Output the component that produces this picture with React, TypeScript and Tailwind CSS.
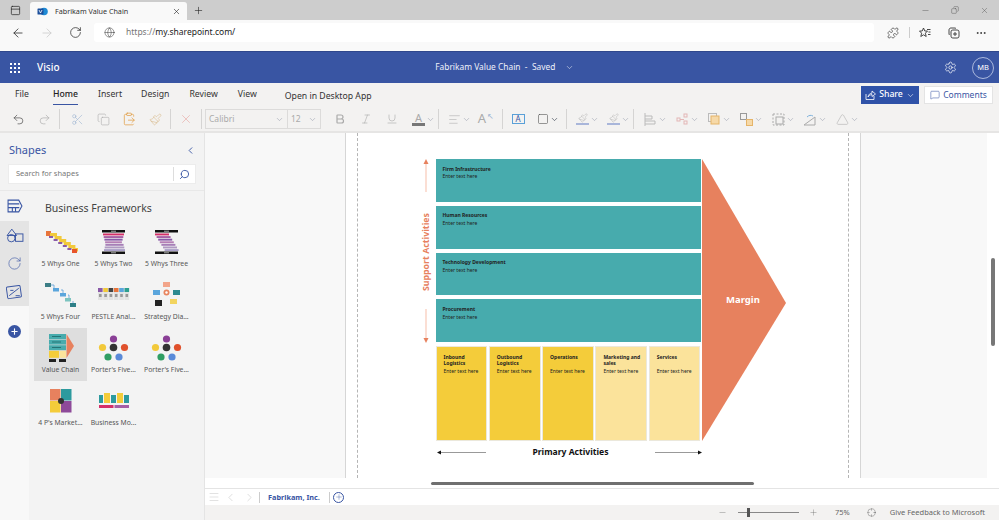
import React from "react";
import {
  ArrowLeft, ArrowRight, RotateCw, Globe, X, Plus, Minus, Settings, ChevronDown, ChevronLeft, ChevronRight,
  Search, MoreHorizontal, Undo2, Redo2, Scissors, Copy, ClipboardPaste, Paintbrush, Bold, Italic, Underline,
  AlignLeft, MessageSquare, Menu, Crosshair, Puzzle, PanelTop, Square, Copy as CopyIcon, Triangle,
} from "lucide-react";

const font = { fontFamily: '"Noto Sans", "Open Sans", sans-serif' };

function Caret({ dark }: { dark?: boolean }) {
  return <ChevronDown size={9} strokeWidth={1.5} className={dark ? "text-gray-800" : "text-gray-400"} />;
}

function Sep() {
  return <div className="w-px h-[20px] bg-[#d5d4d3] mx-[2px] shrink-0" />;
}

function Tool({ w = "w-[26px]", caret, children }: { w?: string; caret?: boolean; children: React.ReactNode }) {
  return (
    <div className={`${w} h-[20px] flex items-center gap-[1px] shrink-0 ${caret ? "justify-end pr-[1px]" : "justify-center"}`}>
      {children}
      {caret && <Caret />}
    </div>
  );
}

function Thumb({ kind }: { kind: string }) {
  if (kind === "one") {
    const c = [0, 1, 2, 3, 4, 5];
    return (
      <svg width="34" height="24" viewBox="0 0 34 24">
        <rect x="2" y="1" width="5" height="5" fill="#e8743b" />
        {c.map((i) => (
          <g key={i}>
            <rect x={6 + i * 4.6} y={3 + i * 3} width="7" height="3.5" fill="#f2c93a" />
            <rect x={5 + i * 4.6} y={6 + i * 3} width="4" height="2" fill="#8a5aa8" />
          </g>
        ))}
        <rect x="28" y="19" width="5" height="4" fill="#e8552b" />
      </svg>
    );
  }
  if (kind === "two" || kind === "three") {
    const skew = kind === "three" ? 1.6 : 0;
    const colors = ["#d42f68", "#a75fa5", "#8a5aa8", "#b57fb5", "#a67fb7", "#b09ac2", "#aaa0c8"];
    return (
      <svg width="26" height="24" viewBox="0 0 26 24">
        <rect x="1" y="0" width="23" height="2.5" fill="#111" />
        <rect x="10" y="0.6" width="5" height="1.3" fill="#888" />
        {colors.map((col, i) => (
          <rect key={i} x={skew ? 1 + i * skew : 2 + Math.min(i, 6 - i) * 0.7 + (i > 3 ? 1 : 0)} y={3.5 + i * 2.6}
            width={skew ? 14 : 21 - Math.min(i, 6 - i) * 1.4} height="1.9" fill={col} />
        ))}
        <rect x="1" y="21.5" width="23" height="2.5" fill="#111" />
        <rect x="10" y="22.1" width="5" height="1.3" fill="#888" />
      </svg>
    );
  }
  if (kind === "four") {
    return (
      <svg width="34" height="26" viewBox="0 0 34 26" fill="none">
        <path d="M6 3H10V8H14M17 8H19V13H21M24 13H25V18H27M29 19V21" stroke="#5aa0d8" strokeWidth="0.8" />
        <rect x="1" y="1" width="6" height="4" fill="#3b7d85" />
        <rect x="9" y="6" width="6" height="3.5" fill="#5aa5dc" />
        <rect x="16" y="11" width="6" height="3.5" fill="#5aa5dc" />
        <rect x="21" y="16" width="6" height="3.5" fill="#7cc4c0" />
        <rect x="26" y="21" width="6" height="4" fill="#2d7f87" />
      </svg>
    );
  }
  if (kind === "pestle") {
    const heads = ["#8a5aa8", "#f2c93a", "#444", "#e8743b", "#5aa5dc", "#2d9f8f"];
    return (
      <svg width="32" height="14" viewBox="0 0 32 14">
        {heads.map((h, i) => (
          <g key={i}>
            <rect x={i * 5.3} y="0" width="4.6" height="12" fill="#e2e2e2" />
            <rect x={i * 5.3} y="0" width="4.6" height="4" fill={h} />
            <rect x={i * 5.3 + 1} y="6" width="2.6" height="3" fill="#999" />
          </g>
        ))}
      </svg>
    );
  }
  if (kind === "strategy") {
    return (
      <svg width="30" height="26" viewBox="0 0 30 26">
        <rect x="11" y="0" width="7" height="5" fill="#f2a58a" />
        <rect x="1" y="8" width="7" height="5" fill="#5aa5dc" />
        <rect x="21" y="8" width="7" height="5" fill="#2d8a90" />
        <circle cx="14.5" cy="10.5" r="3" fill="#e8855f" />
        <circle cx="14.5" cy="10.5" r="1.2" fill="#fff" />
        <rect x="3" y="18" width="7" height="6" fill="#222" />
        <rect x="18" y="17" width="7" height="5" fill="#f2d45f" />
      </svg>
    );
  }
  if (kind === "chain") {
    return (
      <svg width="26" height="29" viewBox="0 0 26 29">
        <rect x="1" y="0" width="17" height="5" fill="#47abad" />
        <rect x="1" y="5.6" width="17" height="5" fill="#47abad" />
        <rect x="1" y="11.2" width="17" height="5" fill="#47abad" />
        <rect x="4" y="2" width="9" height="0.8" fill="#1f6668" />
        <rect x="4" y="7.6" width="9" height="0.8" fill="#1f6668" />
        <rect x="4" y="13.2" width="9" height="0.8" fill="#1f6668" />
        <rect x="1" y="16.8" width="10" height="7" fill="#f4cc3a" />
        <rect x="11.5" y="16.8" width="6.5" height="7" fill="#fbe39b" />
        <path d="M18.5 0L26 12L18.5 24Z" fill="#e7815e" />
        <rect x="1" y="25" width="7" height="3" fill="#222" />
        <rect x="11" y="25" width="7" height="3" fill="#222" />
      </svg>
    );
  }
  if (kind === "porter") {
    return (
      <svg width="31" height="26" viewBox="0 0 31 26">
        <circle cx="15.5" cy="4" r="3.6" fill="#8a3f96" />
        <circle cx="4.5" cy="12.5" r="3.6" fill="#f2c93a" />
        <circle cx="15.5" cy="12.5" r="3.8" fill="#333" />
        <circle cx="26.5" cy="12.5" r="3.6" fill="#e0512c" />
        <circle cx="10" cy="22" r="3.6" fill="#2f9e63" />
        <circle cx="21" cy="22" r="3.6" fill="#5a8ad8" />
      </svg>
    );
  }
  if (kind === "four-p") {
    return (
      <svg width="22" height="24" viewBox="0 0 22 24">
        <rect x="0" y="0" width="10.5" height="11.5" fill="#e7815e" />
        <rect x="11" y="0" width="10.5" height="11.5" fill="#2d9a9e" />
        <rect x="0" y="12" width="10.5" height="11.5" fill="#f4cc3a" />
        <rect x="11" y="12" width="10.5" height="11.5" fill="#8e4a99" />
        <circle cx="11" cy="12" r="3" fill="#333" />
      </svg>
    );
  }
  return (
    <svg width="30" height="16" viewBox="0 0 30 16">
      <rect x="0" y="2" width="4" height="8" fill="#2d9a9e" />
      <rect x="5" y="0" width="6" height="10" fill="#f4cc3a" />
      <rect x="12" y="2" width="5" height="8" fill="#2d9a9e" />
      <rect x="18" y="0" width="6" height="10" fill="#f4cc3a" />
      <rect x="25" y="2" width="5" height="8" fill="#2d9a9e" />
      <rect x="0" y="12" width="14.5" height="3" fill="#d42f68" />
      <rect x="15.5" y="12" width="14.5" height="3" fill="#a75fa5" />
    </svg>
  );
}

const shapes = [
  { label: "5 Whys One", kind: "one" },
  { label: "5 Whys Two", kind: "two" },
  { label: "5 Whys Three", kind: "three" },
  { label: "5 Whys Four", kind: "four" },
  { label: "PESTLE Anal...", kind: "pestle" },
  { label: "Strategy Dia...", kind: "strategy" },
  { label: "Value Chain", kind: "chain", active: true },
  { label: "Porter's Five...", kind: "porter" },
  { label: "Porter's Five...", kind: "porter" },
  { label: "4 P's Market...", kind: "four-p" },
  { label: "Business Mo...", kind: "bm" },
];

function Sidebar() {
  return (
    <div className="w-[205px] shrink-0 bg-[#f3f3f3] border-r border-[#e4e4e4] flex flex-col">
      <div className="h-[31px] pl-[9px] pr-[8px] flex items-center justify-between pt-[3px]">
        <span className="text-[11px] text-[#3955a3]">Shapes</span>
        <ChevronLeft size={11} className="text-[#3955a3]" />
      </div>
      <div className="mx-[8px] h-[20px] bg-white flex items-center border border-[#ececec]">
        <span className="flex-1 pl-[7px] text-[7.5px] text-[#777]">Search for shapes</span>
        <div className="w-px h-[14px] bg-[#ddd]" />
        <Search size={11} strokeWidth={2} className="text-[#3955a3] mx-[5px] -scale-x-100" />
      </div>
      <div className="mt-[6px] border-t border-[#e8e8e8] flex flex-1">
        <div className="w-[29px] shrink-0 bg-[#f8f8f8] flex flex-col">
          <div className="h-[30px] bg-[#f3f3f3] flex items-center justify-center">
            <svg width="16" height="14" viewBox="0 0 15 13" fill="none" stroke="#3955a3" strokeWidth="1">
              <path d="M1 1H11L14 6.5L11 12H1Z" />
              <path d="M1 4.5H11.5M1 8H11.5M5 8V12M8 8V12" />
            </svg>
          </div>
          <div className="h-[28px] bg-[#e4e4e4] flex items-center justify-center">
            <svg width="18" height="15" viewBox="0 0 17 14" fill="none" stroke="#3955a3" strokeWidth="0.9">
              <path d="M5.5 1L10 7H1Z" />
              <circle cx="5" cy="9.5" r="3.5" />
              <rect x="9" y="5.5" width="7" height="7" />
            </svg>
          </div>
          <div className="h-[29px] bg-[#e4e4e4] flex items-center justify-center">
            <RotateCw size={15} strokeWidth={1} className="text-[#3955a3]" />
          </div>
          <div className="h-[28px] bg-[#e4e4e4] flex items-center justify-center">
            <svg width="17" height="17" viewBox="0 0 16 16" fill="none" stroke="#3955a3" strokeWidth="0.9">
              <rect x="1" y="2" width="13" height="11" rx="1" transform="rotate(-8 8 8)" />
              <path d="M3 11L12 4M4 6H7M9 11H13" />
            </svg>
          </div>
          <div className="flex justify-center pt-[19px]">
            <div className="w-[13px] h-[13px] rounded-full bg-[#3955a3] flex items-center justify-center">
              <Plus size={9} strokeWidth={3} className="text-white" />
            </div>
          </div>
        </div>
        <div className="flex-1 pl-[5px]">
          <div className="pl-[11px] pt-[10px] h-[31px] text-[10.5px] text-[#444]">Business Frameworks</div>
          <div className="grid grid-cols-[53px_53px_53px] auto-rows-[53px]">
            {shapes.map((s, i) => (
              <div key={i} className={`flex flex-col items-center ${s.active ? "bg-[#dedede]" : ""}`}>
                <div className="h-[36px] flex items-center justify-center shrink-0 pt-[4px]">
                  <Thumb kind={s.kind} />
                </div>
                <span className="text-[6.8px] text-[#555] whitespace-nowrap leading-[12px]">{s.label}</span>
              </div>
            ))}
          </div>
        </div>
      </div>
    </div>
  );
}

function Cell({ title, yellow, light }: { title: string; yellow?: boolean; light?: boolean }) {
  const bg = yellow
    ? light ? "bg-[#fbe39b] h-[94.5px] border border-[#ebe8dc]" : "bg-[#f4cc3a] h-[94.5px] border border-[#ebe8dc]"
    : "bg-[#47abad] h-[42.75px]";
  return (
    <div className={`${bg} pl-[7px] pt-[6.5px] pr-[4px] text-[5px] leading-[6.3px] text-[#222]`}>
      <div className={`font-bold ${yellow ? "h-[12.6px]" : ""}`}>{title}</div>
      <div className="mt-[1.5px]">Enter text here</div>
    </div>
  );
}

function Diagram() {
  return (
    <div className="flex flex-col pl-[62px] pt-[26px]">
      <div className="flex">
        <div className="w-[15.5px] h-[184px] pr-[3px] flex flex-col items-center justify-between shrink-0">
          <svg width="6" height="33" viewBox="0 0 6 33">
            <path d="M3 4V33" stroke="#f8c9b8" strokeWidth="1.2" />
            <path d="M0.5 5L3 0L5.5 5Z" fill="#e7815e" />
          </svg>
          <span className="mt-[4px] [writing-mode:vertical-rl] rotate-180 text-[8.8px] font-bold text-[#e7815e] leading-none whitespace-nowrap">Support Activities</span>
          <svg width="6" height="34" viewBox="0 0 6 34">
            <path d="M3 0V29" stroke="#f8c9b8" strokeWidth="1.2" />
            <path d="M0.5 29L3 34L5.5 29Z" fill="#e7815e" />
          </svg>
        </div>
        <div className="w-[265px] shrink-0 flex flex-col gap-[4px]">
          <Cell title="Firm Infrastructure" />
          <Cell title="Human Resources" />
          <Cell title="Technology Development" />
          <Cell title="Procurement" />
          <div className="grid grid-cols-5 gap-[1.5px]">
            <Cell yellow title="Inbound Logistics" />
            <Cell yellow title="Outbound Logistics" />
            <Cell yellow title="Operations" />
            <Cell yellow light title="Marketing and sales" />
            <Cell yellow light title="Services" />
          </div>
        </div>
        <div className="relative ml-px w-[84px] h-[282px] shrink-0">
          <svg width="84" height="282" viewBox="0 0 84 282" className="block">
            <path d="M0 0L84 144L0 282Z" fill="#e7815e" />
          </svg>
          <span className="absolute left-[24.5px] top-[135.5px] text-[9.5px] font-bold text-white leading-none">Margin</span>
        </div>
      </div>
      <div className="ml-[17px] w-[265px] mt-[6px] flex items-center justify-between h-[11px]">
        <svg width="49" height="5" viewBox="0 0 49 5">
          <path d="M3 2.5H49" stroke="#999" strokeWidth="1" />
          <path d="M0 2.5L4 0.5V4.5Z" fill="#111" />
        </svg>
        <span className="text-[8.6px] font-bold text-[#111]">Primary Activities</span>
        <svg width="47" height="5" viewBox="0 0 47 5">
          <path d="M0 2.5H44" stroke="#999" strokeWidth="1" />
          <path d="M47 2.5L43 0.5V4.5Z" fill="#111" />
        </svg>
      </div>
    </div>
  );
}

export default function App() {
  return (
    <div style={font} className="w-[999px] h-[520px] overflow-hidden flex flex-col bg-white text-[#333]">
      {/* browser tabs */}
      <div className="h-[20px] bg-[#cdcdcd] flex items-end shrink-0">
        <div className="w-[30px] h-[20px] flex items-center justify-center">
          <PanelTop size={11} strokeWidth={1.5} className="text-[#222]" />
        </div>
        <div className="w-[157px] h-[18px] bg-[#f9f9f9] rounded-t-[3px] flex items-center pl-[7px] pr-[6px]">
          <svg width="11" height="11" viewBox="0 0 11 11" className="shrink-0">
            <circle cx="7" cy="5.5" r="3.8" fill="#1f8ad4" />
            <rect x="0.5" y="2.5" width="6" height="6" rx="0.6" fill="#1b4f9c" />
            <path d="M2 4L3.5 7L5 4" stroke="white" strokeWidth="0.8" fill="none" />
          </svg>
          <span className="ml-[7px] flex-1 text-[7.2px] text-[#333] whitespace-nowrap">Fabrikam Value Chain</span>
          <X size={9} strokeWidth={1.6} className="text-[#222]" />
        </div>
        <div className="w-[22px] h-[20px] flex items-center justify-center">
          <Plus size={11} strokeWidth={1.3} className="text-[#222]" />
        </div>
        <div className="flex-1" />
        <div className="h-[20px] flex items-center gap-[21px] pr-[10px] text-[#444]">
          <Minus size={9} strokeWidth={1} />
          <CopyIcon size={8} strokeWidth={1.2} className="-scale-x-100" />
          <X size={9} strokeWidth={1} />
        </div>
      </div>

      {/* address bar */}
      <div className="h-[31px] bg-[#f9f9f9] flex items-start pt-[3px] shrink-0">
        <div className="w-[94px] h-[19px] flex items-center pl-[11px] gap-[15px]">
          <ArrowLeft size={14} strokeWidth={1.3} className="text-[#222]" />
          <ArrowRight size={14} strokeWidth={1.3} className="text-[#c9c9c9]" />
          <RotateCw size={13} strokeWidth={1.3} className="text-[#222]" />
        </div>
        <div className="w-[780px] h-[19px] bg-white rounded-[3px] flex items-center pl-[10px]">
          <Globe size={11} strokeWidth={1.2} className="text-[#444]" />
          <span className="ml-[11px] text-[8.5px]"><span className="text-[#777]">https://</span><span className="text-[#222]">my.sharepoint.com/</span></span>
        </div>
        <div className="flex-1 h-[19px] flex items-center pl-[13px] text-[#333]">
          <Puzzle size={12} strokeWidth={1.3} />
          <div className="w-px h-[11px] bg-[#ccc] ml-[10px] mr-[9px]" />
          <svg width="12" height="12" viewBox="0 0 12 12" fill="none" stroke="currentColor" strokeWidth="0.9">
            <path d="M4.5 1L5.8 4H8.5L6.4 6.2L7.2 9.5L4.5 7.8L1.8 9.5L2.6 6.2L0.5 4H3.2Z" />
            <path d="M8 2.5H11.5M9.5 5H11.5M9 7.5H11.5" />
          </svg>
          <svg width="12" height="12" viewBox="0 0 12 12" fill="none" stroke="currentColor" strokeWidth="0.9" className="ml-[17px]">
            <path d="M8 1.5C7.5 1 7 1 6 1H3C1.8 1 1 1.8 1 3V6C1 7 1 7.5 1.5 8" />
            <rect x="3" y="3" width="8" height="8" rx="1.8" />
            <path d="M7 5V9M5 7H9" />
          </svg>
          <MoreHorizontal size={12} strokeWidth={1.8} className="ml-[15px]" />
        </div>
      </div>

      {/* app header */}
      <div className="h-[32px] bg-[#3955a3] border-t border-[#2f478c] flex items-center text-white shrink-0">
        <div className="w-[30px] flex justify-center">
          <div className="grid grid-cols-3 gap-[2px]">
            {Array.from({ length: 9 }).map((_, i) => (
              <div key={i} className="w-[2px] h-[2px] bg-white" />
            ))}
          </div>
        </div>
        <span className="ml-[7px] text-[10px] font-medium">Visio</span>
        <div className="flex-1 flex justify-center items-center pl-[6px] gap-[10px]">
          <span className="text-[8.4px] text-[#eef1fa]">Fabrikam Value Chain&nbsp; - &nbsp;Saved</span>
          <ChevronDown size={9} strokeWidth={1.3} />
        </div>
        <Settings size={13} strokeWidth={1.3} className="mr-[15px]" />
        <div className="w-[22px] h-[22px] rounded-full border border-[#aab8dd] flex items-center justify-center text-[7.5px] mr-[5px]">MB</div>
      </div>

      {/* ribbon */}
      <div className="h-[50px] bg-[#f3f2f1] border-b-2 border-[#e6e5e4] shrink-0 flex flex-col">
        <div className="h-[24px] flex items-center text-[8.7px] relative">
          <span className="ml-[15px]">File</span>
          <span className="ml-[24px] h-[20px] pt-[3px] border-b-[1.5px] border-[#3955a3] font-medium text-[#222]">Home</span>
          <span className="ml-[20px]">Insert</span>
          <span className="ml-[19px]">Design</span>
          <span className="ml-[20px]">Review</span>
          <span className="ml-[20px]">View</span>
          <span className="ml-[28px] pt-[3px]">Open in Desktop App</span>
          <div className="flex-1" />
          <div className="w-[58px] h-[18px] bg-[#2f52a8] text-white flex items-center justify-center gap-[3px] font-medium mr-[5px]">
            <svg width="11" height="10" viewBox="0 0 11 10" fill="none" stroke="currentColor" strokeWidth="0.8">
              <path d="M1 4V9.5H9V6" />
              <path d="M3 7C3.5 4.5 5 3.2 7 3.2V1L10.5 4L7 6.5V4.6C5.5 4.6 4 5.3 3 7Z" />
            </svg>
            <span>Share</span>
            <ChevronDown size={9} strokeWidth={1.5} />
          </div>
          <div className="w-[69px] h-[18px] bg-white border border-[#e4e4e4] text-[#3955a3] flex items-center justify-center gap-[3px] text-[8.5px] mr-[6px]">
            <MessageSquare size={10} strokeWidth={1.3} />
            <span>Comments</span>
          </div>
        </div>
        <div className="h-[24px] flex items-center pl-[5px]">
          <Tool><Undo2 size={13} strokeWidth={1.2} className="text-[#444]" /></Tool>
          <Tool><Redo2 size={13} strokeWidth={1.2} className="text-[#aaa]" /></Tool>
          <Sep />
          <div className="w-[2px] shrink-0" />
          <Tool><Scissors size={13} strokeWidth={1.1} className="text-[#9db4d2]" /></Tool>
          <Tool><Copy size={13} strokeWidth={1.1} className="text-[#aaa]" /></Tool>
          <Tool><ClipboardPaste size={14} strokeWidth={1.2} className="text-[#e19a3c]" /></Tool>
          <Tool><Paintbrush size={13} strokeWidth={1.1} className="text-[#d9b98a]" /></Tool>
          <Sep />
          <Tool><X size={14} strokeWidth={1.1} className="text-[#e8a9a4]" /></Tool>
          <Sep />
          <div className="w-[83px] h-[20px] ml-[1px] border border-[#dcdbda] flex items-center justify-between px-[3px] text-[8.5px] text-[#aaa] shrink-0">
            <span>Calibri</span><Caret />
          </div>
          <div className="w-[33px] h-[20px] border border-[#dcdbda] border-l-0 flex items-center justify-between px-[3px] text-[8.5px] text-[#aaa] shrink-0">
            <span>12</span><Caret />
          </div>
          <div className="w-[6px] shrink-0" />
          <Tool><Bold size={12} strokeWidth={2.4} className="text-[#aaa]" /></Tool>
          <Tool><Italic size={12} strokeWidth={1.2} className="text-[#aaa]" /></Tool>
          <Tool><Underline size={12} strokeWidth={1.2} className="text-[#aaa]" /></Tool>
          <Tool w="w-[31px]" caret>
            <div className="flex flex-col items-center leading-none text-[11px] text-[#aaa]">A<div className="w-[13px] h-[3px] bg-[#777]" /></div>
          </Tool>
          <Sep />
          <Tool w="w-[31px]" caret><AlignLeft size={13} strokeWidth={1} className="text-[#aaa]" /></Tool>
          <Tool w="w-[28px]"><span className="text-[13px] text-[#aaa]">A</span><span className="text-[8px] text-[#9db4d2] -mt-[6px]">↖</span></Tool>
          <Sep />
          <Tool><div className="w-[13px] h-[10px] border border-[#5aa0d8] flex items-center justify-center text-[8px] leading-none text-[#3955a3]">A</div></Tool>
          <Tool w="w-[33px]"><Square size={12} strokeWidth={1.2} className="text-[#555]" /><Caret dark /></Tool>
          <Sep />
          <Tool w="w-[31px]" caret>
            <div className="flex flex-col items-center"><Paintbrush size={10} strokeWidth={1} className="text-[#aaa]" /><div className="w-[13px] h-[2px] bg-[#a9b6da]" /></div>
          </Tool>
          <Tool w="w-[31px]" caret>
            <div className="flex flex-col items-center"><Paintbrush size={10} strokeWidth={1} className="text-[#aaa]" /><div className="w-[13px] h-[2px] bg-[#a9b6da]" /></div>
          </Tool>
          <Sep />
          <Tool w="w-[32px]" caret>
            <svg width="13" height="13" viewBox="0 0 13 13" fill="none" stroke="#bbb"><path d="M1 0V13M1 3H8V6H1M1 8H11V11H1" /></svg>
          </Tool>
          <Tool w="w-[32px]" caret>
            <svg width="13" height="13" viewBox="0 0 13 13" fill="none" stroke="#e3b6b6"><rect x="1" y="5" width="3" height="3" /><rect x="8" y="1" width="3" height="3" /><rect x="8" y="8" width="3" height="3" /><path d="M4 6.5H8" /></svg>
          </Tool>
          <Tool w="w-[32px]" caret>
            <svg width="13" height="13" viewBox="0 0 13 13"><rect x="0.5" y="0.5" width="8" height="8" fill="none" stroke="#bbb" /><rect x="3" y="3" width="8" height="8" fill="#f6d9a8" stroke="#e5b469" /></svg>
          </Tool>
          <Tool w="w-[32px]" caret>
            <svg width="13" height="13" viewBox="0 0 13 13"><rect x="0.5" y="0.5" width="6" height="6" fill="none" stroke="#999" /><rect x="6.5" y="6.5" width="6" height="6" fill="#f6d9a8" stroke="#e5b469" /></svg>
          </Tool>
          <Tool w="w-[32px]" caret>
            <svg width="13" height="13" viewBox="0 0 13 13" fill="none" stroke="#aaa"><rect x="1" y="1" width="11" height="11" strokeDasharray="2 1.5" /><rect x="4" y="4" width="7" height="7" /></svg>
          </Tool>
          <Tool w="w-[32px]" caret>
            <svg width="14" height="13" viewBox="0 0 14 13" fill="none" stroke="#aaa"><path d="M1 12L12 4V12Z" /><path d="M4 4C6 2 8 2 10 3" stroke="#7fb2dc" /></svg>
          </Tool>
          <Tool w="w-[32px]" caret><Triangle size={13} strokeWidth={1} className="text-[#aaa]" /></Tool>
        </div>
      </div>

      {/* main */}
      <div className="flex-1 flex min-h-0">
        <Sidebar />
        <div className="flex-1 flex flex-col min-w-0">
          <div className="h-[345px] flex shrink-0">
            <div className="w-[782px] bg-[#f8f8f8] pl-[140px] shrink-0 overflow-hidden">
              <div className="w-[516px] h-full bg-white border-x-[1.5px] border-[#d6d6d6] px-[11px]">
                <div className="h-full border-x border-dashed border-[#b5b5b5]">
                  <Diagram />
                </div>
              </div>
            </div>
            <div className="flex-1 bg-white pl-[4px] pt-[125px]">
              <div className="w-[4px] h-[88px] rounded-full bg-[#777]" />
            </div>
          </div>
          <div className="h-[11px] bg-white border-b border-[#e4e4e4] pl-[226px] pt-[4px] shrink-0">
            <div className="w-[323px] h-[3px] rounded-full bg-[#6f6f6f]" />
          </div>
          <div className="h-[16px] bg-white flex items-center pl-[3px] text-[#c4c4c4] shrink-0">
            <Menu size={12} strokeWidth={1} />
            <ChevronLeft size={13} strokeWidth={1} className="ml-[4px]" />
            <ChevronRight size={13} strokeWidth={1} className="ml-[6px]" />
            <div className="w-px h-[11px] bg-[#ccc] ml-[3px]" />
            <span className="ml-[8px] w-[61px] text-[7.3px] font-bold text-[#3955a3] whitespace-nowrap">Fabrikam, Inc.</span>
            <div className="w-px h-[11px] bg-[#ccc]" />
            <div className="w-[11px] h-[11px] ml-[3px] rounded-full border border-[#3955a3] flex items-center justify-center">
              <Plus size={8} strokeWidth={1.2} className="text-[#3955a3]" />
            </div>
          </div>
          <div className="flex-1 bg-[#f3f2f1] flex items-center text-[#666] text-[7.5px]">
            <div className="flex-1" />
            <Minus size={9} strokeWidth={1} />
            <div className="w-[61px] h-px bg-[#888] ml-[11px] relative">
              <div className="absolute left-[9px] -top-[4px] w-[3px] h-[9px] bg-[#555]" />
            </div>
            <Plus size={9} strokeWidth={1} className="ml-[10px]" />
            <span className="ml-[17px]">75%</span>
            <Crosshair size={9} strokeWidth={1.2} className="ml-[17px]" />
            <span className="ml-[14px] mr-[14px]">Give Feedback to Microsoft</span>
          </div>
        </div>
      </div>
    </div>
  );
}
